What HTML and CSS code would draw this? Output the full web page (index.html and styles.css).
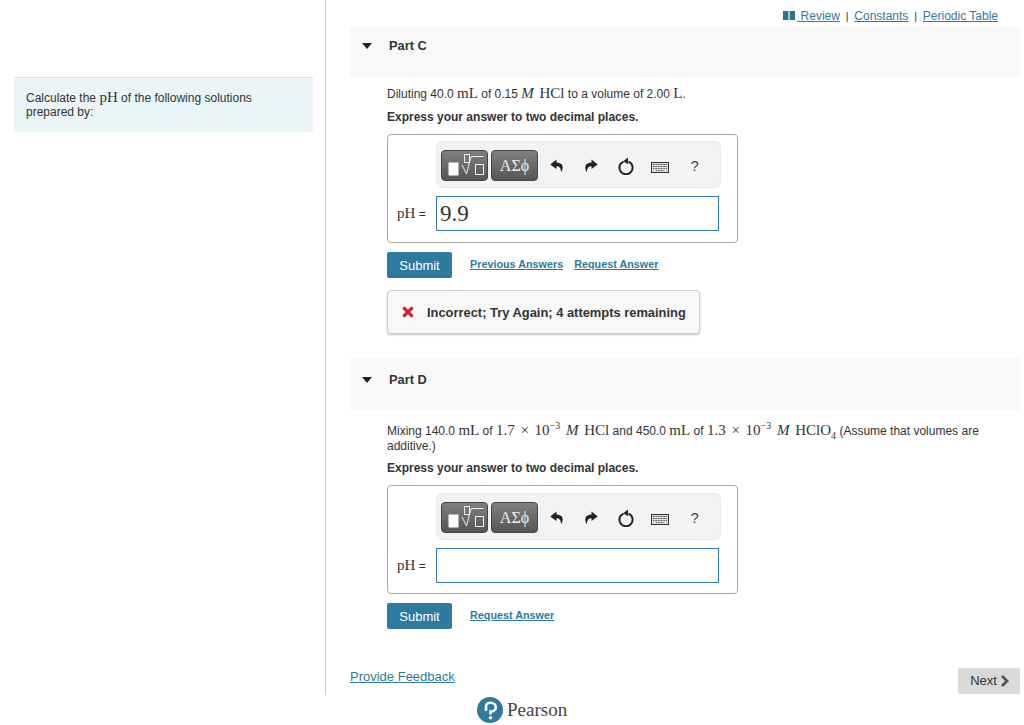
FILE: index.html
```html
<!doctype html>
<html lang="en">
  <head>
    <meta charset="UTF-8" />
    <title>Calculate the pH</title>
    <link rel="stylesheet" href="styles.css">
  </head>
  <body>
    <svg class="icon-defs" width="0" height="0">
      <symbol id="undo" viewBox="0 0 14 14">
        <path d="M6.5 0.6 L0.3 5.6 L6.5 10 L6.5 7.3 C9.3 7.3 10.8 8.8 11.3 13.4 C14 8 13 3.6 6.5 3.4 Z" />
      </symbol>
      <symbol id="redo" viewBox="0 0 14 14">
        <path d="M7.5 0.6 L13.7 5.6 L7.5 10 L7.5 7.3 C4.7 7.3 3.2 8.8 2.7 13.4 C0 8 1 3.6 7.5 3.4 Z" />
      </symbol>
      <symbol id="reload" viewBox="0 0 16 18">
        <path class="reload-ring" d="M5.4 4.6 A6.6 6.6 0 1 0 10.6 4.6" />
        <path d="M9.8 0.4 L5.2 4.2 L10.2 7.2 Z" />
      </symbol>
      <symbol id="keyboard" viewBox="0 0 18 11">
        <rect x="0.5" y="0.5" width="17" height="10" fill="#ddd" stroke="#333" />
        <path class="keys" d="M2 2.5 H16 M2 4.5 H16 M2 6.5 H16 M5 8.6 H13" />
      </symbol>
      <symbol id="math" viewBox="0 0 42 26">
        <rect x="4.5" y="9.5" width="10" height="13" fill="#fff" />
        <rect class="thin" x="20.5" y="1.5" width="5" height="8" />
        <path class="thin" d="M18 12 L22.5 21 L27 3.5 H39.5" />
        <rect class="thin" x="31.5" y="11.5" width="8" height="10" />
      </symbol>
    </svg>

    <div class="page">
      <aside class="sidebar">
        <div class="intro">
          Calculate the <span class="math">pH</span> of the following solutions<br />prepared by:
        </div>
      </aside>

      <main class="main">
        <div class="top-links">
          <svg class="book-icon" viewBox="0 0 12 9" width="12" height="9">
            <rect x="0" y="0" width="5.4" height="9" />
            <rect x="6.6" y="0" width="5.4" height="9" />
          </svg>
          <a href="#">&nbsp;Review</a>
          <span class="sep">|</span>
          <a href="#">Constants</a>
          <span class="sep">|</span>
          <a href="#">Periodic Table</a>
        </div>

        <section class="part part-c">
          <div class="part-header">
            <span class="caret"></span>
            <span class="part-title">Part C</span>
          </div>
          <div class="part-body">
            <p class="question">
              Diluting 40.0 <span class="math">mL</span> of 0.15 <span class="math"><i>M</i> HCl</span> to a volume of 2.00 <span class="math">L</span>.
            </p>
            <p class="instruction">Express your answer to two decimal places.</p>

            <div class="answer-box">
              <div class="toolbar">
                <button class="tool-btn"><svg width="42" height="26"><use href="#math" /></svg></button>
                <button class="tool-btn tool-greek">ΑΣϕ</button>
                <span class="tool-icon"><svg width="14" height="14"><use href="#undo" /></svg></span>
                <span class="tool-icon"><svg width="14" height="14"><use href="#redo" /></svg></span>
                <span class="tool-icon"><svg width="16" height="18"><use href="#reload" /></svg></span>
                <span class="tool-icon tool-keyboard"><svg width="18" height="11"><use href="#keyboard" /></svg></span>
                <span class="tool-icon tool-help">?</span>
              </div>
              <div class="answer-row">
                <label class="answer-label"><span class="math">pH</span> =</label>
                <div class="answer-input">9.9</div>
              </div>
            </div>

            <div class="actions">
              <button class="submit">Submit</button>
              <a class="action-link" href="#">Previous Answers</a>
              <a class="action-link" href="#">Request Answer</a>
            </div>

            <div class="feedback">
              <svg class="x-icon" viewBox="0 0 14 14" width="14" height="14">
                <path d="M1.2 3.4 L3.4 1.2 L7 4.8 L10.6 1.2 L12.8 3.4 L9.2 7 L12.8 10.6 L10.6 12.8 L7 9.2 L3.4 12.8 L1.2 10.6 L4.8 7 Z" />
              </svg>
              Incorrect; Try Again; 4 attempts remaining
            </div>
          </div>
        </section>

        <section class="part part-d">
          <div class="part-header">
            <span class="caret"></span>
            <span class="part-title">Part D</span>
          </div>
          <div class="part-body">
            <p class="question">
              Mixing 140.0 <span class="math">mL</span> of <span class="math">1.7 × 10<sup>−3</sup> <i>M</i> HCl</span> and 450.0 <span class="math">mL</span> of <span class="math">1.3 × 10<sup>−3</sup> <i>M</i> HClO<sub>4</sub></span> (Assume that volumes are<br />additive.)
            </p>
            <p class="instruction">Express your answer to two decimal places.</p>

            <div class="answer-box">
              <div class="toolbar">
                <button class="tool-btn"><svg width="42" height="26"><use href="#math" /></svg></button>
                <button class="tool-btn tool-greek">ΑΣϕ</button>
                <span class="tool-icon"><svg width="14" height="14"><use href="#undo" /></svg></span>
                <span class="tool-icon"><svg width="14" height="14"><use href="#redo" /></svg></span>
                <span class="tool-icon"><svg width="16" height="18"><use href="#reload" /></svg></span>
                <span class="tool-icon tool-keyboard"><svg width="18" height="11"><use href="#keyboard" /></svg></span>
                <span class="tool-icon tool-help">?</span>
              </div>
              <div class="answer-row">
                <label class="answer-label"><span class="math">pH</span> =</label>
                <div class="answer-input"></div>
              </div>
            </div>

            <div class="actions">
              <button class="submit">Submit</button>
              <a class="action-link" href="#">Request Answer</a>
            </div>
          </div>
        </section>

        <div class="page-footer">
          <a class="feedback-link" href="#">Provide Feedback</a>
          <button class="next-btn">
            Next
            <svg viewBox="0 0 9 12" width="9" height="12"><path d="M2 1 L7 6 L2 11" /></svg>
          </button>
        </div>
      </main>
    </div>

    <div class="brand">
      <svg class="brand-logo" viewBox="0 0 26 26" width="26" height="26">
        <circle cx="13" cy="13" r="13" fill="#2e7a9e" />
        <path d="M9 14 V9.5 C9 6.5 11 5.8 13.5 5.8 C16.8 5.8 18.8 7.8 18.8 10.3 C18.8 13 16.5 14.5 13.5 14.5 V17.5" fill="none" stroke="#fff" stroke-width="2.6" />
        <circle cx="13.5" cy="20.8" r="1.7" fill="#fff" />
      </svg>
      <span class="brand-name">Pearson</span>
    </div>
  </body>
</html>
```

FILE: styles.css
```css
* {
  margin: 0;
  padding: 0;
  box-sizing: border-box;
}

body {
  font-family: 'Liberation Sans', Arial, sans-serif;
  font-size: 12px;
  color: #333;
  background: white;
}

a {
  color: #2e7a9e;
}

.icon-defs {
  position: absolute;
}

.math {
  font-family: 'Liberation Serif', 'Times New Roman', serif;
  font-size: 15px;
  line-height: 12px;
  word-spacing: 2px;
}

.math sup,
.math sub {
  font-size: 10px;
  line-height: 0;
}

.page {
  display: flex;
  height: 695px;
}

.sidebar {
  width: 326px;
  flex: none;
  border-right: 1px solid #ccc;
  padding: 77px 12px 0 14px;
}

.intro {
  height: 55px;
  padding: 13px 12px;
  background: #e9f5f7;
  border-top: 1px solid #d5e2e6;
  font-size: 12px;
  line-height: 14px;
  color: #333;
}

.main {
  flex: 1;
  min-width: 0;
  padding: 0 4px 0 24px;
  display: flex;
  flex-direction: column;
}

.top-links {
  height: 27px;
  padding: 9px 22px 0 0;
  display: flex;
  justify-content: flex-end;
  align-items: baseline;
  gap: 5.8px;
  font-size: 12px;
  line-height: 14px;
}

.book-icon {
  fill: #2e6f8e;
  margin-right: -4px;
}

.sep {
  color: #333;
  font-size: 11px;
}

.part-header {
  height: 50px;
  padding: 12px 0 0 12px;
  display: flex;
  align-items: flex-start;
  background: #f8f8f8;
}

.part-d .part-header {
  height: 52px;
  padding-top: 15px;
}

.caret {
  width: 0;
  height: 0;
  margin: 4px 17px 0 0;
  border-left: 5.5px solid transparent;
  border-right: 5.5px solid transparent;
  border-top: 6px solid #222;
}

.part-title {
  font-size: 12.8px;
  line-height: 14px;
  font-weight: bold;
  color: #333;
}

.part-body {
  padding: 10px 0 0 37px;
}

.part-c .part-body {
  height: 281px;
}

.part-d .part-body {
  padding-top: 14px;
}

.question {
  padding-right: 38px;
  font-size: 12px;
  line-height: 15px;
  color: #333;
}

.instruction {
  margin-top: 8px;
  font-size: 12px;
  line-height: 15px;
  font-weight: bold;
  color: #333;
}

.part-d .instruction {
  margin-top: 7px;
}

.answer-box {
  width: 351px;
  height: 109px;
  margin-top: 9px;
  padding: 6px 18px 0 9px;
  border: 1px solid #aaa;
  border-radius: 4px;
}

.part-d .answer-box {
  padding-top: 7px;
}

.toolbar {
  width: 285px;
  height: 47px;
  margin-left: 39px;
  padding: 2px 0 0 4px;
  display: flex;
  align-items: center;
  gap: 3px;
  background: #f3f3f3;
  border: 1px solid #e8e8e8;
  border-radius: 6px;
}

.tool-btn {
  width: 47px;
  height: 31px;
  display: flex;
  align-items: center;
  justify-content: center;
  background: linear-gradient(#808080, #555);
  border: 1px solid #444;
  border-radius: 4px;
  color: #eee;
}

.thin {
  fill: none;
  stroke: #eee;
  stroke-width: 1;
}

.tool-greek {
  font-family: 'Liberation Serif', 'Times New Roman', serif;
  font-size: 16px;
}

.tool-icon {
  width: 31.5px;
  display: flex;
  justify-content: center;
  align-items: center;
  fill: #222;
}

.tool-keyboard {
  margin-top: 4px;
}

.reload-ring {
  fill: none;
  stroke: #222;
  stroke-width: 2;
}

.keys {
  fill: none;
  stroke: #555;
  stroke-width: 1;
  stroke-dasharray: 1 0.6;
}

.tool-help {
  font-size: 15px;
  color: #444;
}

.answer-row {
  display: flex;
  align-items: center;
  margin-top: 8px;
}

.answer-label {
  width: 39px;
  flex: none;
  font-size: 12px;
  color: #333;
}

.answer-input {
  width: 283px;
  height: 35px;
  padding-left: 3px;
  border: 1px solid #2e7a9e;
  font-family: 'Liberation Serif', 'Times New Roman', serif;
  font-size: 23px;
  line-height: 33px;
  color: #333;
}

.actions {
  display: flex;
  align-items: center;
  margin-top: 9px;
}

.submit {
  width: 65px;
  height: 26px;
  margin-right: 18px;
  background: #2e7a9e;
  border: none;
  border-radius: 2px;
  color: white;
  font-family: inherit;
  font-size: 13px;
}

.action-link {
  margin-right: 11px;
  font-size: 10.8px;
  font-weight: bold;
  position: relative;
  top: -1px;
}

.feedback {
  width: 313px;
  height: 44px;
  margin-top: 12px;
  padding-left: 13px;
  display: flex;
  align-items: center;
  gap: 12px;
  background: #f8f8f8;
  border: 1px solid #ccc;
  border-radius: 4px;
  box-shadow: 0 1px 2px rgba(0, 0, 0, 0.25);
  font-size: 12.9px;
  font-weight: bold;
  color: #333;
}

.x-icon {
  fill: #c8242b;
  flex: none;
}

.page-footer {
  margin-top: auto;
  height: 27px;
  display: flex;
  justify-content: space-between;
}

.feedback-link {
  font-size: 13px;
  line-height: 17px;
}

.next-btn {
  width: 62px;
  height: 26px;
  padding: 0 0 1px 1px;
  display: flex;
  align-items: center;
  justify-content: center;
  gap: 3px;
  background: #d9d9d9;
  border: none;
  border-radius: 2px;
  color: #333;
  font-family: inherit;
  font-size: 13px;
}

.next-btn svg {
  fill: none;
  stroke: #555;
  stroke-width: 2.8;
}

.brand {
  display: flex;
  align-items: center;
  gap: 4px;
  height: 30px;
  padding-left: 477px;
}

.brand-name {
  font-family: 'Liberation Serif', 'Times New Roman', serif;
  font-size: 19px;
  color: #444;
}
```
